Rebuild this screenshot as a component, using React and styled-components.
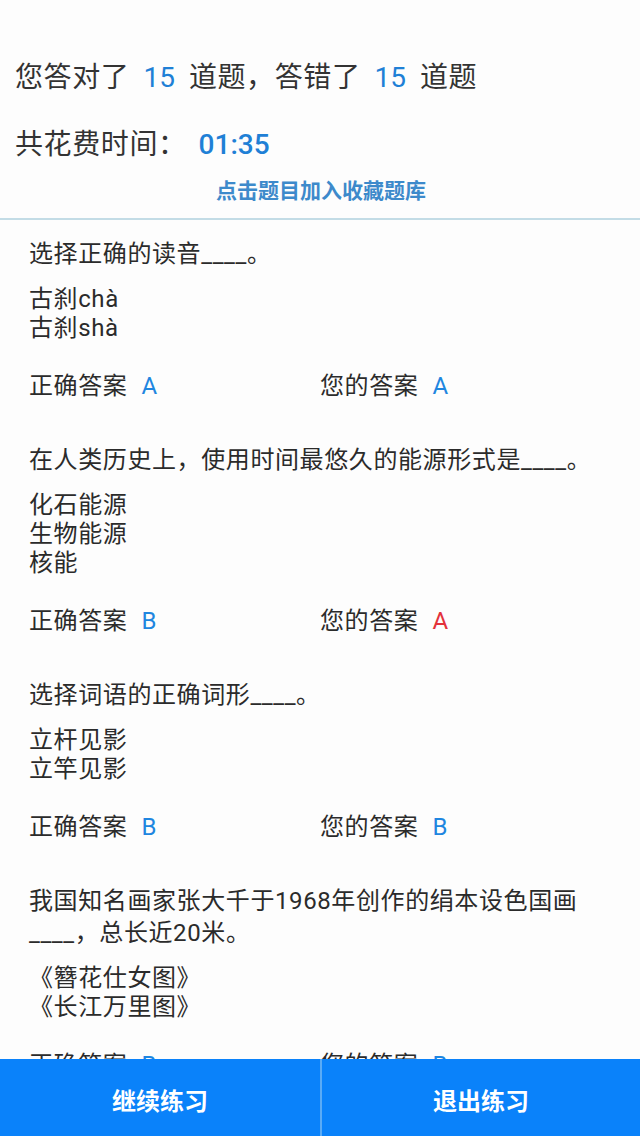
import React from "react";
import styled, { createGlobalStyle } from "styled-components";

const Global = createGlobalStyle`
  html, body { margin: 0; padding: 0; background: #fdfdfd; }
  body { font-family: Roboto, "Noto Sans CJK SC", sans-serif; color: #2b2b2b; }
`;

const Page = styled.div`
  min-height: 1136px;
  padding-bottom: 77px;
  box-sizing: border-box;
`;

const Header = styled.header`
  padding: 60px 15px 14px;
  border-bottom: 2px solid #c3dce6;
  display: flex;
  flex-direction: column;
`;

const SummaryLine = styled.div`
  font-size: 28px;
  line-height: 36px;
  letter-spacing: 0.6px;
  color: #333;
  margin-top: ${(p) => p.$gap || 0}px;
  white-space: nowrap;
`;

const Num = styled.span`
  color: #1f80d6;
  margin: 0 ${(p) => p.$space ?? 14}px;
  font-weight: ${(p) => (p.$medium ? 500 : 400)};
  letter-spacing: 0;
`;

const Link = styled.div`
  margin-top: 15px;
  text-align: center;
  font-size: 21px;
  line-height: 26px;
  font-weight: 700;
  color: #3d8acb;
  padding-left: 2px;
`;

const List = styled.main`
  padding: 18px 29px 0;
  display: flex;
  flex-direction: column;
  gap: 42px;
  font-size: 24px;
  letter-spacing: 0.6px;
`;

const Question = styled.section`
  display: flex;
  flex-direction: column;
`;

const Title = styled.div`
  line-height: 32px;
`;

const Options = styled.div`
  margin-top: 15px;
  display: flex;
  flex-direction: column;
  line-height: 29px;
`;

const AnswerRow = styled.div`
  margin-top: 27px;
  display: grid;
  grid-template-columns: 1fr 1fr;
  line-height: 32px;
`;

const Letter = styled.span`
  margin-left: 14px;
  color: ${(p) => (p.$wrong ? "#e3323b" : "#1f86e0")};
`;

const BottomBar = styled.nav`
  position: fixed;
  left: 0;
  right: 0;
  bottom: 0;
  height: 77px;
  display: grid;
  grid-template-columns: 1fr 1fr;
  background: #0a82fa;
`;

const BarButton = styled.button`
  border: none;
  background: #0a82fa;
  color: #fff;
  font-family: Roboto, "Noto Sans CJK SC", sans-serif;
  font-size: 24px;
  font-weight: 700;
  padding: 3px 0 0;
  & + & { border-left: 2px solid #5aabf6; }
`;

const questions = [
  {
    title: "选择正确的读音____。",
    options: ["古刹chà", "古刹shà"],
    correct: "A",
    mine: "A",
  },
  {
    title: "在人类历史上，使用时间最悠久的能源形式是____。",
    options: ["化石能源", "生物能源", "核能"],
    correct: "B",
    mine: "A",
  },
  {
    title: "选择词语的正确词形____。",
    options: ["立杆见影", "立竿见影"],
    correct: "B",
    mine: "B",
  },
  {
    title: "我国知名画家张大千于1968年创作的绢本设色国画____，总长近20米。",
    options: ["《簪花仕女图》", "《长江万里图》"],
    correct: "B",
    mine: "B",
  },
];

export default function App() {
  return (
    <Page>
      <Global />
      <Header>
        <SummaryLine>
          您答对了<Num>15</Num>道题，答错了<Num>15</Num>道题
        </SummaryLine>
        <SummaryLine $gap={31}>
          共花费时间：<Num $medium $space={12}>01:35</Num>
        </SummaryLine>
        <Link>点击题目加入收藏题库</Link>
      </Header>
      <List>
        {questions.map((q, i) => (
          <Question key={i}>
            <Title>{q.title}</Title>
            <Options>
              {q.options.map((o) => (
                <div key={o}>{o}</div>
              ))}
            </Options>
            <AnswerRow>
              <div>
                正确答案<Letter>{q.correct}</Letter>
              </div>
              <div>
                您的答案<Letter $wrong={q.mine !== q.correct}>{q.mine}</Letter>
              </div>
            </AnswerRow>
          </Question>
        ))}
      </List>
      <BottomBar>
        <BarButton>继续练习</BarButton>
        <BarButton>退出练习</BarButton>
      </BottomBar>
    </Page>
  );
}
